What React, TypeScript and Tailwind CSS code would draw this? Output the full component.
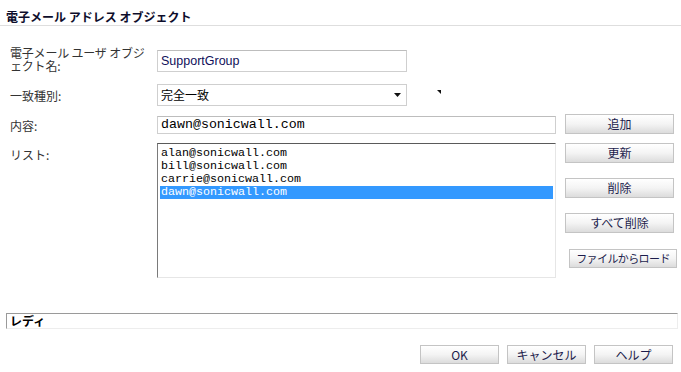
const jp = { fontFamily: '"Noto Sans CJK JP", "Liberation Sans", sans-serif' };
const mono = { fontFamily: '"Liberation Mono", "Noto Sans CJK JP", monospace' };

const emails = ["alan@sonicwall.com", "bill@sonicwall.com", "carrie@sonicwall.com", "dawn@sonicwall.com"];

const Btn = ({ label, className = "" }: { label: string; className?: string }) => (
  <div
    style={jp}
    className={`flex items-center justify-center whitespace-nowrap border border-[#c4c4c4] bg-gradient-to-b from-white via-[#f4f4f4] to-[#dcdcdc] leading-none text-[#1c1c4c] ${className}`}
  >
    {label}
  </div>
);

export default function App() {
  return (
    <div className="w-[681px] h-[372px] bg-white overflow-hidden text-[#333]" style={jp}>
      <div className="h-[26px] border-b border-[#dedede] pl-[6px] pt-[10px]">
        <h1 className="text-[12px] leading-[13px] font-bold text-[#0d0d2b]">電子メール アドレス オブジェクト</h1>
      </div>

      <div className="pl-[10px]">
        <div className="flex items-start mt-[20px]">
          <div className="w-[147px] text-[12px] whitespace-nowrap tracking-[-0.2px]">
            <div className="h-[13px] leading-[13px]">電子メール ユーザ オブジ</div>
            <div className="h-[13px] leading-[13px]">ェクト名:</div>
          </div>
          <div className="mt-[4px] w-[250px] h-[22px] border border-[#cfcfcf] border-t-[#bdbdbd] flex items-center pl-[3px] text-[12.5px] text-[#10105a]" style={{ fontFamily: '"Liberation Sans", sans-serif' }}>
            SupportGroup
          </div>
        </div>

        <div className="flex items-start mt-[12px]">
          <div className="w-[147px] pt-[5px] text-[12px] leading-[13px]">一致種別:</div>
          <div className="w-[250px] h-[22px] border border-[#cfcfcf] flex items-center justify-between pl-[3px] pr-[5px] text-[12px] text-black">
            <span>完全一致</span>
            <svg width="7" height="4" viewBox="0 0 7 4"><path d="M0 0h7L3.5 4z" fill="#111" /></svg>
          </div>
          <svg className="ml-[30px] mt-[6px]" width="4" height="4" viewBox="0 0 4 4"><path d="M0 0h4v4z" fill="#111" /></svg>
        </div>

        <div className="flex items-start mt-[8px]">
          <div className="w-[147px] pt-[5px] text-[12px] leading-[13px]">内容:</div>
          <div className="mt-[2px] w-[399px] h-[18px] border border-[#cfcfcf] border-t-[#bdbdbd] flex items-center pl-[3px] text-[13.3px] text-black" style={mono}>
            dawn@sonicwall.com
          </div>
          <Btn label="追加" className="ml-[9px] w-[109px] h-[20px] text-[12px]" />
        </div>

        <div className="flex items-start mt-[9px]">
          <div className="w-[147px] pt-[5px] text-[12px] leading-[13px]">リスト:</div>
          <div className="w-[399px] h-[135px] border border-[#e6e6e6] border-t-[#5a5a5a] border-l-[#7a7a7a] pt-[3px] pl-[2px] pr-[2px]">
            {emails.map((e, i) => (
              <div
                key={e}
                style={mono}
                className={`h-[13px] leading-[13px] text-[11.67px] pl-[1px] ${i === 3 ? "bg-[#3399ff] text-white" : "text-black"}`}
              >
                {e}
              </div>
            ))}
          </div>
          <div className="ml-[9px] flex flex-col">
            <Btn label="更新" className="w-[109px] h-[20px] text-[12px]" />
            <Btn label="削除" className="mt-[15px] w-[109px] h-[20px] text-[12px]" />
            <Btn label="すべて削除" className="mt-[15px] w-[109px] h-[20px] text-[12px]" />
            <Btn label="ファイルからロード" className="mt-[16px] ml-[4px] w-[108px] h-[19px] text-[11px] tracking-[-0.6px]" />
          </div>
        </div>
      </div>

      <div className="ml-[6px] mt-[35px] w-[672px] h-[16px] border border-[#ededed] border-t-[#9a9a9a] border-l-[#9a9a9a] flex items-center pl-[3px] text-[12px] font-bold text-black leading-none">
        レディ
      </div>

      <div className="flex justify-end gap-[8px] pr-[8px] mt-[16px]">
        <Btn label="OK" className="w-[79px] h-[19px] text-[12px]" />
        <Btn label="キャンセル" className="w-[79px] h-[19px] text-[12px]" />
        <Btn label="ヘルプ" className="w-[79px] h-[19px] text-[12px]" />
      </div>
    </div>
  );
}
